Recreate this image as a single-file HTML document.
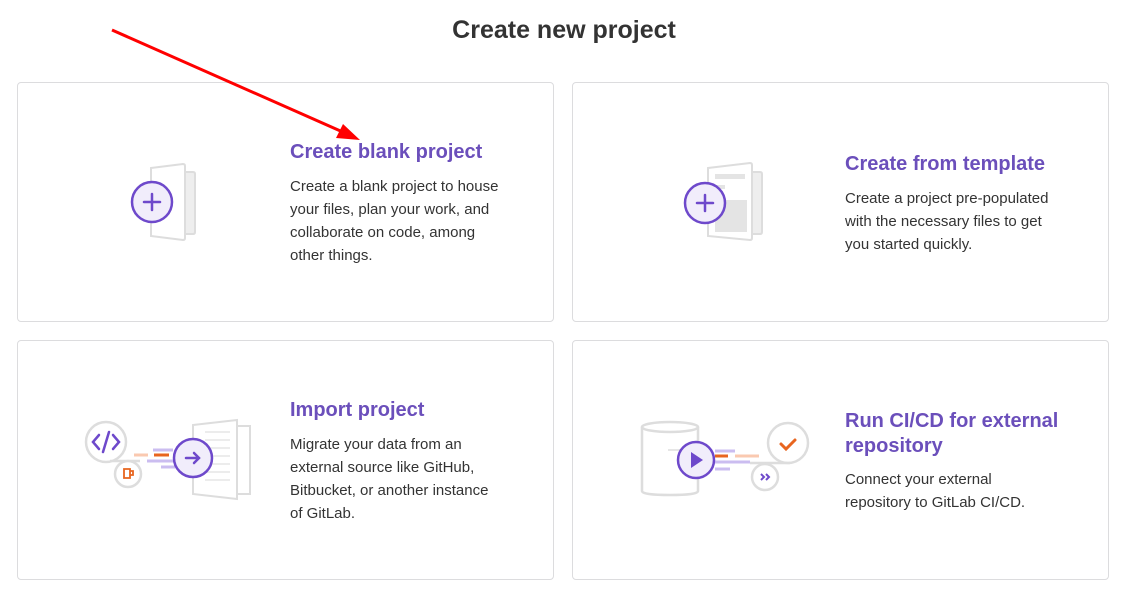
<!DOCTYPE html>
<html><head><style>
body{margin:0;width:1128px;height:590px;background:#fff;font-family:"Liberation Sans",sans-serif;position:relative;overflow:hidden}
h1{position:absolute;top:16px;left:0;width:1128px;text-align:center;margin:0;font-size:25px;font-weight:bold;color:#333}
.card{position:absolute;border:1px solid #dcdcde;border-radius:4px;width:537px;height:240px;box-sizing:border-box}
.t{position:absolute;font-size:20px;font-weight:bold;color:#6b4fbb;line-height:25px}
.d{position:absolute;font-size:15px;color:#333;line-height:23px;width:225px}
svg{position:absolute;left:0;top:0}
</style></head><body>
<h1>Create new project</h1>
<div class="card" style="left:17px;top:82px"></div>
<div class="card" style="left:572px;top:82px"></div>
<div class="card" style="left:17px;top:340px"></div>
<div class="card" style="left:572px;top:340px"></div>

<div class="t" style="left:290px;top:140px">Create blank project</div>
<div class="d" style="left:290px;top:175px;width:215px">Create a blank project to house your files, plan your work, and collaborate on code, among other things.</div>
<div class="t" style="left:845px;top:152px">Create from template</div>
<div class="d" style="left:845px;top:187px">Create a project pre-populated with the necessary files to get you started quickly.</div>
<div class="t" style="left:290px;top:398px">Import project</div>
<div class="d" style="left:290px;top:433px;width:215px">Migrate your data from an external source like GitHub, Bitbucket, or another instance of GitLab.</div>
<div class="t" style="left:845px;top:409px;width:230px">Run CI/CD for external repository</div>
<div class="d" style="left:845px;top:468px;width:200px">Connect your external repository to GitLab CI/CD.</div>

<svg width="1128" height="590" fill="none">
<path d="M183 172 L193 172 Q195 172 195 174 L195 232 Q195 234 193 234 L183 234Z" fill="#eee" stroke="#ddd" stroke-width="2"/>
<path d="M151 168 L183 164 Q185 164 185 166 L185 238 Q185 240 183 240 L151 236Z" fill="#fff" stroke="#ddd" stroke-width="2"/>
<circle cx="152" cy="202" r="20" fill="#f1edfb" stroke="#6e49cb" stroke-width="2.5"/>
<path d="M152 194v16M144 202h16" stroke="#6e49cb" stroke-width="2.5" stroke-linecap="round"/>
<path d="M750 172 L760 172 Q762 172 762 174 L762 232 Q762 234 760 234 L750 234Z" fill="#eee" stroke="#ddd" stroke-width="2"/>
<path d="M708 168 L750 163 Q752 163 752 165 L752 238 Q752 240 750 240 L708 236Z" fill="#fff" stroke="#ddd" stroke-width="2"/>
<rect x="715" y="174" width="30" height="5" fill="#e4e4e4"/>
<rect x="715" y="185" width="10" height="4" fill="#e4e4e4"/>
<rect x="715" y="200" width="32" height="32" fill="#e4e4e4"/>
<circle cx="705" cy="203" r="20" fill="#f1edfb" stroke="#6e49cb" stroke-width="2.5"/>
<path d="M705 195v16M697 203h16" stroke="#6e49cb" stroke-width="2.5" stroke-linecap="round"/>
<path d="M236 426 L250 426 L250 494 L236 494" fill="#fff" stroke="#ddd" stroke-width="2"/>
<path d="M193 425 L237 420 L237 499 L193 494Z" fill="#fff" stroke="#ddd" stroke-width="2"/>
<g stroke="#e6e6e6" stroke-width="1.5"><path d="M205 432h25M205 440h25M205 448h25M205 456h25M205 464h25M205 472h25M205 480h25"/></g>
<circle cx="106" cy="442" r="20" stroke="#ddd" stroke-width="2.5"/>
<path d="M99 435l-6 7 6 7M113 435l6 7-6 7M109 432l-6 20" stroke="#6e49cb" stroke-width="2.5" stroke-linecap="round"/>
<path d="M110 461 L140 461" stroke="#ddd" stroke-width="2.5"/>
<circle cx="128" cy="474" r="13" fill="#fff" stroke="#ddd" stroke-width="2.5"/>
<path d="M124 469h6v9h-6zM130 471h3v4h-3" stroke="#e8651f" stroke-width="1.8"/>
<path d="M134 455h14" stroke="#fac9b0" stroke-width="3"/>
<path d="M154 455h15" stroke="#e8651f" stroke-width="3"/>
<path d="M153 450h20M147 461h28M161 467h14" stroke="#cbbdf0" stroke-width="3"/>
<circle cx="193" cy="458" r="19" fill="#f1edfb" stroke="#6e49cb" stroke-width="2.5"/>
<path d="M186 458h13M194 453l5 5-5 5" stroke="#6e49cb" stroke-width="2.5" stroke-linecap="round"/>
<path d="M642 427 L642 491 Q642 495 670 495 Q698 495 698 491 L698 427" fill="#fff" stroke="#ddd" stroke-width="2.5"/>
<ellipse cx="670" cy="427" rx="28" ry="5" fill="#fff" stroke="#ddd" stroke-width="2.5"/>
<path d="M668 450h20" stroke="#ddd" stroke-width="1.5"/>
<circle cx="788" cy="443" r="20" fill="#fff" stroke="#ddd" stroke-width="2.5"/>
<path d="M781 444l5 5 9-9" stroke="#e8651f" stroke-width="3" stroke-linecap="round"/>
<path d="M750 463h40" stroke="#ddd" stroke-width="2.5"/>
<circle cx="765" cy="477" r="13" fill="#fff" stroke="#ddd" stroke-width="2.5"/>
<path d="M761 474l3 3-3 3M766 474l3 3-3 3" stroke="#6e49cb" stroke-width="2"/>
<path d="M715 456h13" stroke="#e8651f" stroke-width="3"/>
<path d="M735 456h24" stroke="#fac9b0" stroke-width="3"/>
<path d="M715 451h20M715 462h35M715 469h15" stroke="#cbbdf0" stroke-width="3"/>
<circle cx="696" cy="460" r="18" fill="#f1edfb" stroke="#6e49cb" stroke-width="2.5"/>
<path d="M691 452 L703 460 L691 468Z" fill="#6e49cb"/>
<path d="M112 30 L345 133" stroke="#f00" stroke-width="3"/>
<path d="M360 140 L336 138 L343 124Z" fill="#f00"/>
</svg>
</body></html>
